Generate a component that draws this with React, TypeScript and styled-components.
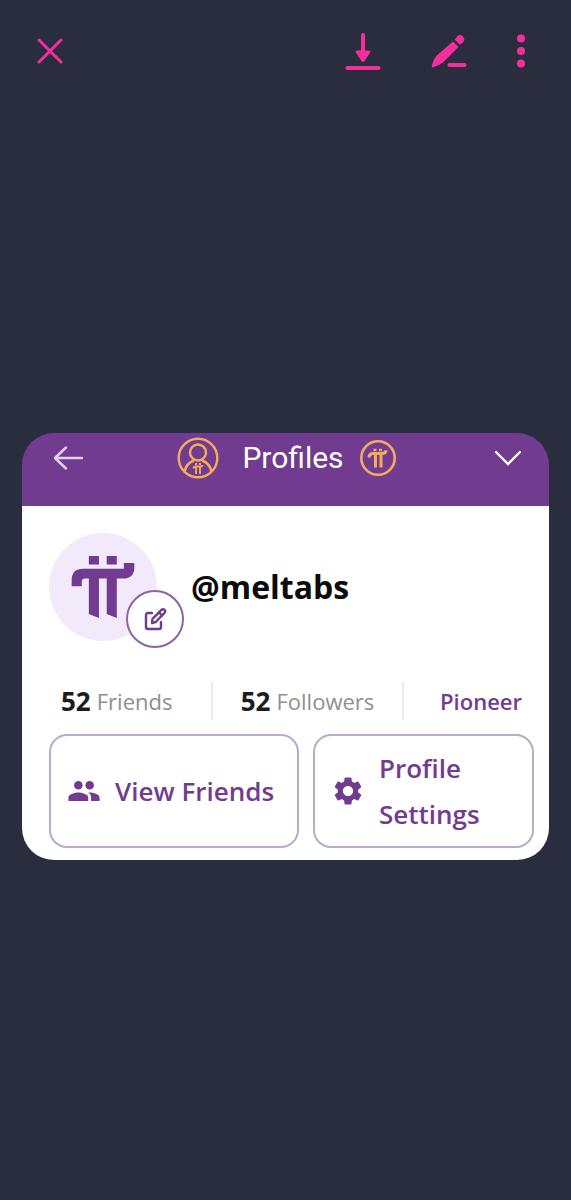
import React from 'react';
import styled, { createGlobalStyle } from 'styled-components';
import { MdSettings } from 'react-icons/md';

const colors = {
  page: '#2a2d3e',
  pink: '#f42f9b',
  purple: '#713c8f',
  lilac: '#f2eafa',
  gold: '#f5ab5f',
  border: '#baabc8',
  muted: '#8f8f8f',
};

const GlobalStyle = createGlobalStyle`
  * {
    box-sizing: border-box;
  }

  body {
    margin: 0;
    background: ${colors.page};
    font-family: 'Open Sans', 'Noto Sans', sans-serif;
  }
`;

const Page = styled.div`
  display: flex;
  flex-direction: column;
  min-height: 100vh;
`;

const Toolbar = styled.header`
  display: flex;
  align-items: center;
  justify-content: space-between;
  height: 92px;
  padding: 10px 42px 0 28px;
`;

const ToolbarActions = styled.div`
  display: flex;
  align-items: center;
  gap: 42px;
`;

const IconButton = styled.button`
  display: flex;
  align-items: center;
  justify-content: center;
  width: 44px;
  height: 44px;
  padding: 0;
  border: 0;
  background: none;
  color: inherit;
  cursor: pointer;

  svg {
    flex: none;
  }
`;

const ToolbarButton = styled(IconButton)<{ $narrow?: boolean }>`
  width: ${({ $narrow }) => ($narrow ? 16 : 44)}px;
  color: ${colors.pink};
`;

const Viewer = styled.main`
  display: flex;
  flex: 1;
  flex-direction: column;
  justify-content: center;
  padding: 0 22px;
`;

const Card = styled.section`
  overflow: hidden;
  border-radius: 32px;
`;

const CardHeader = styled.div`
  display: flex;
  align-items: flex-start;
  justify-content: space-between;
  height: 73px;
  padding: 3px 20px 0 24px;
  background: ${colors.purple};
  color: #fff;
`;

const Title = styled.div`
  display: flex;
  align-items: center;
  height: 44px;
  padding-right: 2px;

  h1 {
    margin: 0 16px 0 23px;
    font-family: Roboto, sans-serif;
    font-size: 30px;
    font-weight: 400;
    line-height: 44px;
  }
`;

const CardBody = styled.div`
  padding: 27px 15px 12px 27px;
  background: #fff;
`;

const Identity = styled.div`
  display: flex;
  align-items: center;
  gap: 34px;
`;

const Avatar = styled.div`
  position: relative;
  display: flex;
  align-items: center;
  justify-content: center;
  width: 108px;
  height: 108px;
  border-radius: 50%;
  background: ${colors.lilac};
  color: ${colors.purple};
`;

const EditBadge = styled(IconButton)`
  position: absolute;
  right: -27px;
  bottom: -7px;
  width: 58px;
  height: 58px;
  border: 2px solid #8a66a2;
  border-radius: 50%;
  background: #fff;
`;

const Username = styled.h2`
  margin: 0;
  color: #0c0c0c;
  font-size: 32px;
  font-weight: 700;
  line-height: 44px;
`;

const Stats = styled.div`
  display: grid;
  grid-template-columns: 162fr 191fr 132fr;
  margin-top: 41px;
`;

const Stat = styled.div<{ $align?: string }>`
  display: flex;
  align-items: center;
  justify-content: ${({ $align = 'center' }) => $align};
  gap: 6px;
  height: 38px;
  padding: 0 12px;
  color: ${colors.muted};
  font-size: 22px;
  line-height: 38px;

  & + & {
    border-left: 2px solid #ebebeb;
  }

  strong {
    color: #1c1c1c;
    font-size: 26px;
    font-weight: 700;
  }
`;

const Role = styled.span`
  color: ${colors.purple};
  font-weight: 600;
`;

const Actions = styled.div`
  display: grid;
  grid-template-columns: 250fr 221fr;
  gap: 14px;
  margin-top: 14px;
`;

const ActionButton = styled.button`
  display: flex;
  align-items: center;
  gap: 14px;
  height: 114px;
  padding: 0 16px;
  border: 2px solid ${colors.border};
  border-radius: 18px;
  background: #fff;
  color: ${colors.purple};
  font-family: inherit;
  font-size: 26px;
  font-weight: 600;
  line-height: 46px;
  text-align: left;
  cursor: pointer;

  svg {
    flex: none;
  }
`;

const PiMark = ({ size }: { size: number }) => (
  <svg width={size} height={size} viewBox="92 90 190 190" fill="currentColor" aria-hidden="true">
    <path d="M145 93h30v25h-30zM198 93h30v25h-30z" />
    <path d="M94 183v-18q0-34 34-34h121v-17h31v12q0 34-34 34h-18v117l-30-12V160h-23v117l-30-12V160h-11q-10 0-10 10v13z" />
  </svg>
);

const CloseIcon = () => (
  <svg width="26" height="26" viewBox="0 0 26 26" stroke="currentColor" strokeWidth="3" strokeLinecap="round" aria-hidden="true">
    <path d="M2 2l22 22M24 2L2 24" />
  </svg>
);

const DownloadIcon = () => (
  <svg width="36" height="38" viewBox="0 0 36 38" fill="currentColor" aria-hidden="true">
    <path d="M18 3v18" stroke="currentColor" strokeWidth="4" strokeLinecap="round" />
    <path d="M12 18.500h12q2.400 0 1 2.200l-5.500 8.300q-1.500 1.800-3 0L11 20.700q-1.400-2.200 1-2.200z" />
    <rect x="0.500" y="34" width="35" height="4" rx="2" />
  </svg>
);

const PencilIcon = () => (
  <svg width="36" height="34" viewBox="0 0 36 34" fill="currentColor" aria-hidden="true">
    <path d="M22 7.500l5.500 5.500-14.500 14.500q-2.500 2.500-10.500 5.800-2.200.5-1.700-1.800 2-7 5-10z" />
    <path d="M23.800 5.700l2.300-3.200q2.800-2.800 5.800 0 2.800 3 0 6l-3.100 2.300z" />
    <rect x="16.500" y="29" width="19" height="4" rx="2" />
  </svg>
);

const DotsIcon = () => (
  <svg width="8" height="34" viewBox="0 0 8 34" fill="currentColor" aria-hidden="true">
    <circle cx="4" cy="4.500" r="4" />
    <circle cx="4" cy="17" r="4" />
    <circle cx="4" cy="29.500" r="4" />
  </svg>
);

const BackIcon = () => (
  <svg width="32" height="26" viewBox="0 0 32 26" fill="none" stroke="#e3cdf0" strokeWidth="2.500" strokeLinecap="round" strokeLinejoin="round" aria-hidden="true">
    <path d="M30 13H4M14 2.500L3 13l11 10.500" />
  </svg>
);

const ChevronIcon = () => (
  <svg width="28" height="16" viewBox="0 0 28 16" fill="none" stroke="currentColor" strokeWidth="2.400" strokeLinecap="round" aria-hidden="true">
    <path d="M3 2l12 12L27 2" />
  </svg>
);

const ProfileCoin = () => (
  <svg width="42" height="42" viewBox="0 0 42 42" fill="none" stroke={colors.gold} strokeWidth="2.400" aria-hidden="true">
    <circle cx="21" cy="21" r="19.300" />
    <circle cx="21" cy="15.500" r="8" />
    <path d="M7.500 34.500Q9.500 26 17 23.500M34.500 34.500Q32.500 26 25 23.500" />
    <path d="M16.500 31.500q0-2 2-2h5q2 0 2-1.500M19 29.500V37M23 29.500V37M18 27h2M22 27h2" strokeWidth="1.800" />
  </svg>
);

const PiCoin = () => (
  <svg width="36" height="36" viewBox="0 0 36 36" fill="none" stroke={colors.gold} aria-hidden="true">
    <circle cx="18" cy="18" r="16.700" strokeWidth="2.600" />
    <path d="M9 17.500q0-4 4-4h9q4 0 4-3.200M15.500 13.500v14M21 13.500v14" strokeWidth="3" />
    <path d="M13.500 10h3M19 10h3" strokeWidth="2.400" />
  </svg>
);

const EditIcon = () => (
  <svg width="24" height="24" viewBox="0 0 24 24" fill="none" stroke="currentColor" strokeWidth="2.400" strokeLinecap="round" strokeLinejoin="round" aria-hidden="true">
    <path d="M9 6H5Q3 6 3 8v12q0 2 2 2h11q2 0 2-2v-5" />
    <path d="M9 16l.5-4.200 9-9q1.500-1.300 3 0t0 3l-8.800 9.200z" />
    <path d="M16 5.500l3 3" />
  </svg>
);

const PeopleIcon = () => (
  <svg width="34" height="34" viewBox="0 0 24 24" fill="currentColor" aria-hidden="true">
    <circle cx="8" cy="8" r="3" />
    <circle cx="16" cy="8" r="3" />
    <path d="M8 13c-2.330 0-7 1.170-7 3.500V19h14v-2.500c0-2.330-4.670-3.500-7-3.500z" />
    <path d="M16 13c-.29 0-.62.02-.97.05 1.160.84 1.970 1.970 1.970 3.450V19h6v-2.500c0-2.330-4.670-3.500-7-3.500z" />
  </svg>
);

const App: React.FC = () => (
  <Page>
    <GlobalStyle />
    <Toolbar>
      <ToolbarButton type="button" aria-label="Close">
        <CloseIcon />
      </ToolbarButton>
      <ToolbarActions>
        <ToolbarButton type="button" aria-label="Download">
          <DownloadIcon />
        </ToolbarButton>
        <ToolbarButton type="button" aria-label="Edit image">
          <PencilIcon />
        </ToolbarButton>
        <ToolbarButton type="button" aria-label="More options" $narrow>
          <DotsIcon />
        </ToolbarButton>
      </ToolbarActions>
    </Toolbar>

    <Viewer>
      <Card>
        <CardHeader>
          <IconButton type="button" aria-label="Back">
            <BackIcon />
          </IconButton>
          <Title>
            <ProfileCoin />
            <h1>Profiles</h1>
            <PiCoin />
          </Title>
          <IconButton type="button" aria-label="Expand">
            <ChevronIcon />
          </IconButton>
        </CardHeader>

        <CardBody>
          <Identity>
            <Avatar>
              <PiMark size={64} />
              <EditBadge type="button" aria-label="Edit profile">
                <EditIcon />
              </EditBadge>
            </Avatar>
            <Username>@meltabs</Username>
          </Identity>

          <Stats>
            <Stat $align="flex-start">
              <strong>52</strong> Friends
            </Stat>
            <Stat>
              <strong>52</strong> Followers
            </Stat>
            <Stat $align="flex-end">
              <Role>Pioneer</Role>
            </Stat>
          </Stats>

          <Actions>
            <ActionButton type="button">
              <PeopleIcon />
              View Friends
            </ActionButton>
            <ActionButton type="button">
              <MdSettings size={34} />
              Profile Settings
            </ActionButton>
          </Actions>
        </CardBody>
      </Card>
    </Viewer>
  </Page>
);

export default App;
